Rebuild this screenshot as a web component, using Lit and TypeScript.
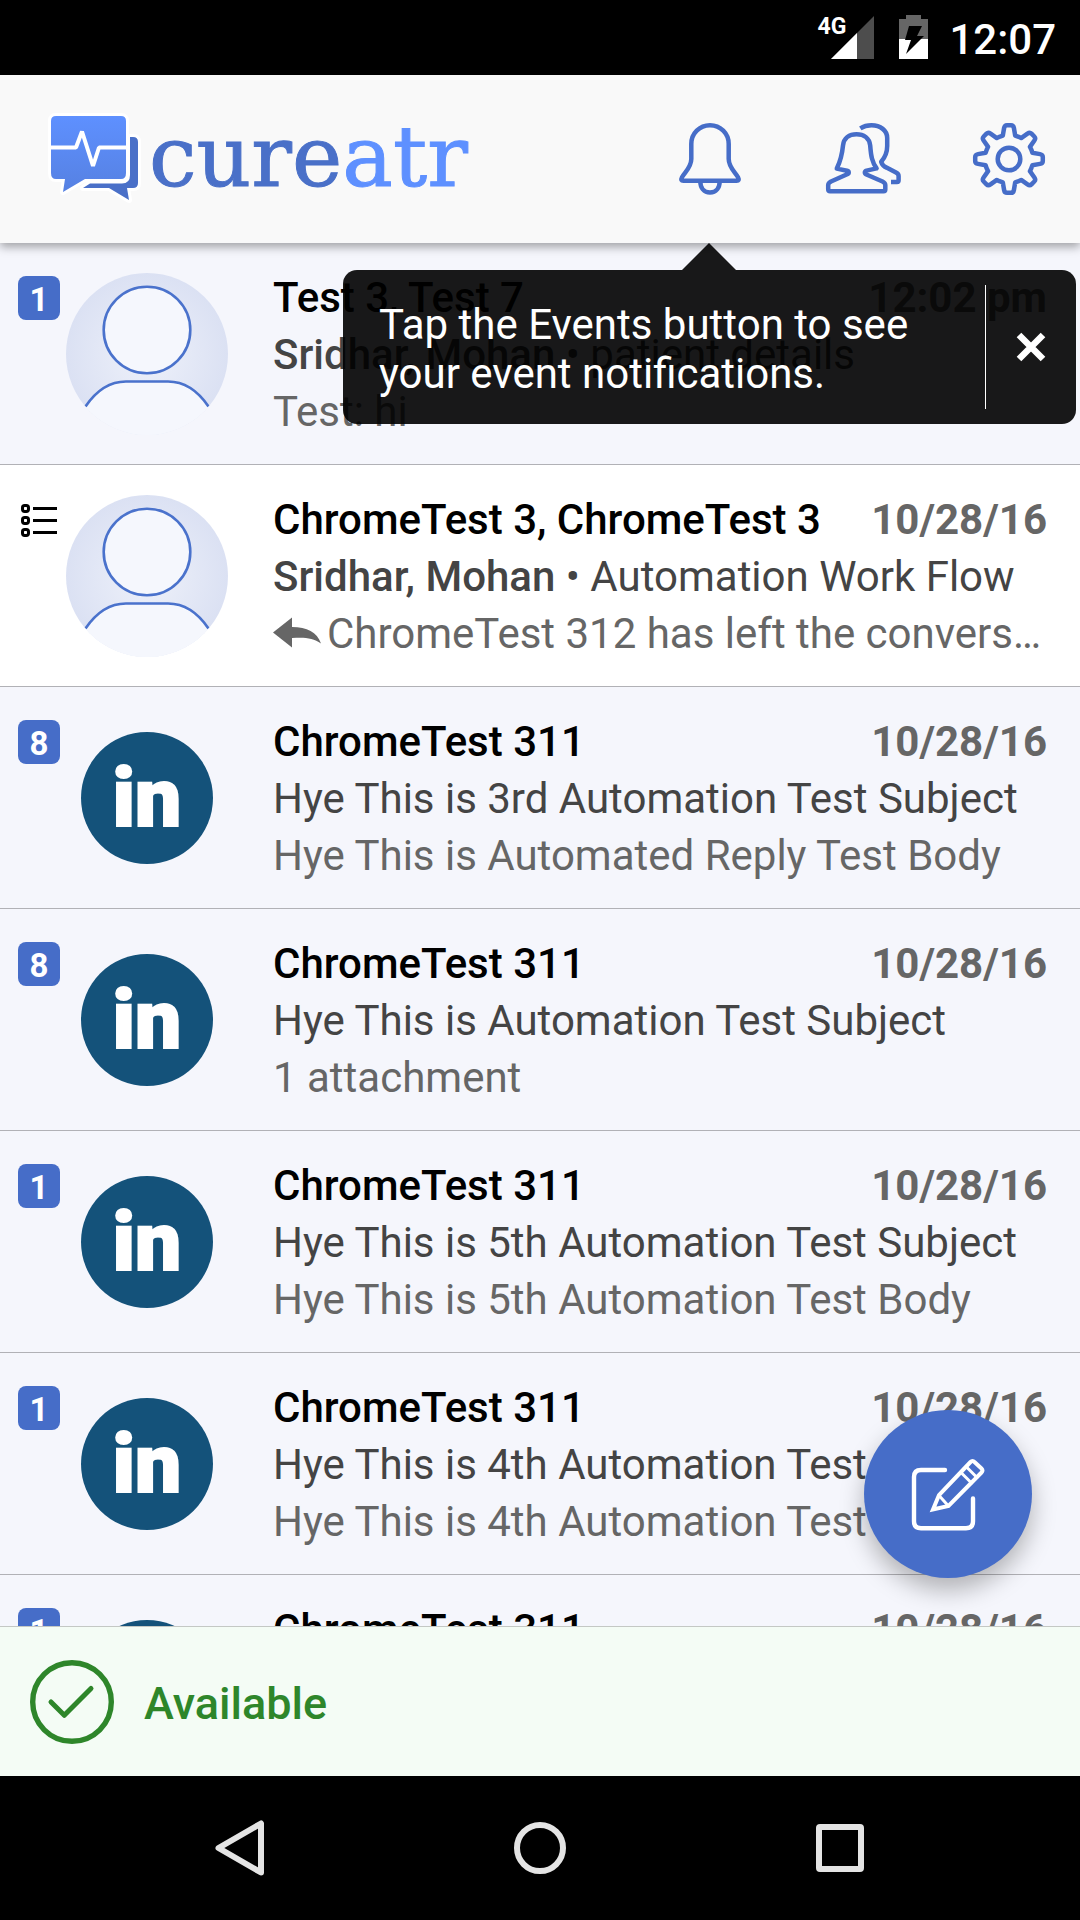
import { LitElement, html, css, svg, nothing } from "lit";
import { customElement, property, state } from "lit/decorators.js";

interface Conversation {
  unread?: string;
  avatar: "person" | "linkedin";
  name: string;
  date: string;
  author?: string;
  subject: string;
  preview: string;
  replied?: boolean;
  read?: boolean;
}

const conversations: Conversation[] = [
  { unread: "1", avatar: "person", name: "Test 3, Test 7", date: "12:02 pm", author: "Sridhar, Mohan", subject: "patient details", preview: "Test: hi" },
  { avatar: "person", name: "ChromeTest 3, ChromeTest 3", date: "10/28/16", author: "Sridhar, Mohan", subject: "Automation Work Flow", preview: "ChromeTest 312 has left the conversation", replied: true, read: true },
  { unread: "8", avatar: "linkedin", name: "ChromeTest 311", date: "10/28/16", subject: "Hye This is 3rd Automation Test Subject", preview: "Hye This is Automated Reply Test Body" },
  { unread: "8", avatar: "linkedin", name: "ChromeTest 311", date: "10/28/16", subject: "Hye This is Automation Test Subject", preview: "1 attachment" },
  { unread: "1", avatar: "linkedin", name: "ChromeTest 311", date: "10/28/16", subject: "Hye This is 5th Automation Test Subject", preview: "Hye This is 5th Automation Test Body" },
  { unread: "1", avatar: "linkedin", name: "ChromeTest 311", date: "10/28/16", subject: "Hye This is 4th Automation Test Subject", preview: "Hye This is 4th Automation Test Body" },
  { unread: "1", avatar: "linkedin", name: "ChromeTest 311", date: "10/28/16", subject: "Hye This is 2nd Automation Test Subject", preview: "Hye This is 2nd Automation Test Body" },
];

/** Outline of an eight-toothed gear centred on 36,36. */
function gearPath(): string {
  const at = (x: number, y: number, turn: number) => {
    const a = (turn * Math.PI) / 4;
    const px = 36 + x * Math.cos(a) - y * Math.sin(a);
    const py = 36 + x * Math.sin(a) + y * Math.cos(a);
    return `${px.toFixed(2)} ${py.toFixed(2)}`;
  };
  let d = "";
  for (let k = 0; k < 8; k++) {
    d += `${k ? "L" : "M"}${at(-6.2, -23.4, k)}L${at(-4.9, -31, k)}Q${at(-4.4, -33.8, k)} ${at(-2, -33.8, k)}`;
    d += `L${at(2, -33.8, k)}Q${at(4.4, -33.8, k)} ${at(4.9, -31, k)}L${at(6.2, -23.4, k)}L${at(9.6, -22.2, k)}`;
  }
  return d + "Z";
}

const bellIcon = svg`
  <path d="M17.3 21C17.3 10.4 25.6 2.3 36 2.3S54.7 10.4 54.7 21V36C54.7 44.5 61.5 49.5 64 54.2C65.4 56.8 64.6 57.7 62.6 57.7H9.4C7.4 57.7 6.6 56.8 8 54.2C10.5 49.5 17.3 44.5 17.3 36Z"/>
  <path d="M26.3 58C26.3 65 30 69.6 36 69.6S45.7 65 45.7 58"/>`;

const peopleIcon = svg`
  <path d="M10.8 45.6C14 39 16 33 17 22.5C17.8 15 23.4 11.3 30.5 11.3S43.3 15 44.2 22.5C45 33 46 39 50.6 45.4L40.5 47.6C38.4 48.2 38.2 50.4 40.4 51.5L56.5 58.5C58.6 59.6 59.3 60.3 59.3 62V66.6Q59.3 68.3 57.6 68.3H4Q2.2 68.3 2.2 66.6V62C2.2 60.3 3 59.6 5 58.5L21.2 51.3C23.4 50.2 23.2 48.3 21 47.7Z"/>
  <path d="M34.3 5.3C38 3 41.5 2.3 45.5 2.3C54.5 2.3 61.2 7.6 61.2 15V23C61.2 30.5 58.5 35 55.2 38.8C56.2 42.3 57.5 43.3 60.5 44.6L70 49.5C72 50.5 72.6 51.5 72.6 53V57.3Q72.6 59 71 59H65"/>`;

@customElement("contact-avatar")
export class ContactAvatar extends LitElement {
  @property() kind: "person" | "linkedin" = "person";

  static styles = css`
    :host { display: grid; place-items: center; width: 162px; height: 162px; }
    .brand {
      display: grid; place-items: center; width: 132px; height: 132px;
      border-radius: 50%; background: #14527a;
    }
    .mark { font: 900 82px/96px Roboto, sans-serif; color: #fff; -webkit-text-stroke: 2px #fff; }
    svg { display: block; width: 162px; height: 162px; }
  `;

  render() {
    if (this.kind === "linkedin") {
      return html`<div class="brand"><span class="mark">in</span></div>`;
    }
    return html`
      <svg viewBox="0 0 162 162" aria-hidden="true">
        <defs>
          <radialGradient id="disc"><stop offset="0" stop-color="#eef1fa"/><stop offset="1" stop-color="#dbe1f3"/></radialGradient>
          <clipPath id="round"><circle cx="81" cy="81" r="81"/></clipPath>
        </defs>
        <g clip-path="url(#round)">
          <rect width="162" height="162" fill="url(#disc)"/>
          <path d="M20 134C30 119 44 108.5 60 108.5H102C118 108.5 132 119 142 134V170H20Z" fill="#f5f7fd"/>
          <rect y="134" width="162" height="30" fill="#f5f7fd"/>
          <path d="M19.5 133.500C30 118 44 108.500 60 108.500H102C118 108.500 132 118 142.500 133.500" fill="none" stroke="#4a72cc" stroke-width="2.600"/>
        </g>
        <circle cx="81" cy="57" r="43.300" fill="#f5f7fd" stroke="#4a72cc" stroke-width="2.600"/>
      </svg>`;
  }
}

@customElement("conversation-row")
export class ConversationRow extends LitElement {
  @property({ attribute: false }) item!: Conversation;

  static styles = css`
    :host { display: block; }
    .row {
      display: grid; grid-template-columns: 66px 207px minmax(0, 1fr);
      height: 221px; border-bottom: 1px solid #b1b1b6;
      background: #f5f6fc; color: #444; text-decoration: none;
      font: 400 42px/57px Roboto, sans-serif;
    }
    .row.read { background: #fff; }
    .badge {
      width: 42px; height: 44px; margin: 33px 0 0 18px; border-radius: 8px;
      background: #466dc8; color: #fff; text-align: center;
      font-size: 33px; line-height: 48px; font-weight: 700;
    }
    .flow { display: block; width: 36px; height: 33px; margin: 39px 0 0 21px; }
    .face { margin-top: 30px; }
    .body { padding: 26px 33px 0 0; }
    .top { display: flex; justify-content: space-between; gap: 24px; }
    .line, .name { white-space: nowrap; overflow: hidden; text-overflow: ellipsis; }
    .name { color: #000; font-weight: 500; }
    .date { color: #666; font-weight: 700; white-space: nowrap; }
    .author { font-weight: 500; }
    .preview { display: flex; gap: 6px; color: #666; }
    .reply { flex: none; width: 48px; height: 57px; }
  `;

  render() {
    const c = this.item;
    return html`
      <a class="row ${c.read ? "read" : ""}" href="#conversation">
        ${c.unread
          ? html`<span class="badge">${c.unread}</span>`
          : html`<svg class="flow" viewBox="0 0 36 33" fill="none" stroke="#000" stroke-width="3" aria-hidden="true">
              ${[4.5, 16.5, 28.5].map((y) => svg`<rect x="1.500" y=${y - 3} width="6" height="6" rx="2.200"/><path d=${`M12 ${y}H36`}/>`)}
            </svg>`}
        <contact-avatar class="face" .kind=${c.avatar}></contact-avatar>
        <div class="body">
          <div class="top">
            <span class="name">${c.name}</span>
            <span class="date">${c.date}</span>
          </div>
          <div class="line">${c.author ? html`<span class="author">${c.author}</span> • ` : nothing}${c.subject}</div>
          <div class="preview">
            ${c.replied
              ? html`<svg class="reply" viewBox="0 0 48 57" fill="#666" aria-hidden="true"><path d="M0 27.500L19 12.500V22C34 22 44 27 48 38.500C40 33 32 32 19 33V42.500Z"/></svg>`
              : nothing}
            <span class="line">${c.preview}</span>
          </div>
        </div>
      </a>`;
  }
}

@customElement("app-root")
export class AppRoot extends LitElement {
  @state() private tipOpen = true;

  static styles = css`
    :host {
      display: flex; flex-direction: column; height: 100vh; overflow: hidden;
      font-family: Roboto, sans-serif; background: #000;
    }
    button { margin: 0; padding: 0; border: 0; background: none; font: inherit; color: inherit; cursor: pointer; }
    svg { display: block; }
    .status {
      flex: none; height: 75px; padding-right: 24px; display: flex;
      justify-content: flex-end; align-items: flex-start; color: #fff;
    }
    .network { font-size: 23px; line-height: 24px; font-weight: 700; margin-top: 15px; }
    .signal { width: 43px; height: 43px; margin: 16px 25px 0 -15px; }
    .battery { width: 29px; height: 44px; margin: 15px 21px 0 0; }
    .clock { font-size: 42px; line-height: 50px; font-weight: 500; margin-top: 15px; }

    .header {
      position: relative; z-index: 2; flex: none; height: 168px; display: flex;
      align-items: center; justify-content: space-between;
      background: #f9f9f9; box-shadow: 0 4px 9px rgba(0, 0, 0, 0.34);
    }
    .brand { display: flex; align-items: center; margin-left: 48px; gap: 7px; text-decoration: none; }
    .logo { width: 94px; height: 92px; }
    .wordmark { font: 400 85px/100px "DejaVu Serif", serif; color: #4a70c8; -webkit-text-stroke: 1px currentColor; padding-bottom: 4px; }
    .wordmark .light { color: #5e90ff; }
    .tools { display: flex; }
    .tool { width: 152px; height: 168px; display: grid; place-items: center; }
    .tool:last-child { width: 142px; }
    .tool svg { width: 72px; height: 72px; overflow: visible; }
    .line-icon { fill: none; stroke: #466dc8; stroke-width: 4.5; stroke-linejoin: round; }

    .tip {
      position: absolute; top: 100%; right: 4px; margin-top: 27px; width: 733px;
      display: flex; box-sizing: border-box; padding: 15px 0;
      border-radius: 14px; background: rgba(0, 0, 0, 0.9); color: #fff;
    }
    .tip::before {
      content: ""; position: absolute; bottom: 100%; right: 340px; width: 54px; height: 27px;
      background: rgba(0, 0, 0, 0.9); clip-path: polygon(50% 0, 100% 100%, 0 100%);
    }
    .tip-text { flex: 1; margin: 0; padding: 15px 60px 11px 36px; font-size: 42px; line-height: 49px; }
    .tip-close { width: 91px; border-left: 1px solid #fff; display: grid; place-items: center; }
    .tip-close svg { width: 30px; height: 30px; }

    .main { position: relative; flex: 1; min-height: 0; overflow: hidden; background: #f5f6fc; }
    .list { list-style: none; margin: 0; padding: 0; height: 100%; overflow: hidden; }
    .compose {
      position: absolute; right: 48px; bottom: 48px; width: 168px; height: 168px;
      border-radius: 50%; background: #466dc8; display: grid; place-items: center;
      box-shadow: 0 12px 24px rgba(0, 0, 0, 0.28);
    }
    .compose svg { width: 75px; height: 75px; }

    .availability {
      flex: none; height: 150px; border-top: 1px solid #c4c8c4; padding: 0 30px;
      display: flex; align-items: center; gap: 30px; background: #f4fcf5; color: #2e862a;
      font-size: 45px; font-weight: 500; text-align: left;
    }
    .availability svg { width: 84px; height: 84px; }
    .status-label { padding-top: 4px; }
    .nav { flex: none; height: 144px; padding: 0 90px; display: grid; grid-template-columns: repeat(3, 1fr); }
    .nav button { display: grid; place-items: center; }
    .nav svg { width: 60px; height: 60px; fill: none; stroke: #e4e4e4; stroke-width: 6; stroke-linejoin: round; }
  `;

  render() {
    return html`
      <div class="status">
        <span class="network">4G</span>
        <svg class="signal" viewBox="0 0 43 43" aria-hidden="true">
          <path d="M43 0V43H0Z" fill="#4d4d4d"/><path d="M26 17V43H0Z" fill="#fff"/>
        </svg>
        <svg class="battery" viewBox="0 0 29 44" aria-hidden="true">
          <path d="M7 0H22V4H29V44H0V4H7Z" fill="#666"/><path d="M0 24H29V44H0Z" fill="#fff"/>
          <path d="M10 11H23L18 21H25L7 39L12 25H6Z" fill="#000"/>
        </svg>
        <span class="clock">12:07</span>
      </div>

      <header class="header">
        <a class="brand" href="#home">
          <svg class="logo" viewBox="0 0 94 92" aria-hidden="true">
            <defs>
              <linearGradient id="front" x2="0" y2="1"><stop offset="0" stop-color="#5e90ff"/><stop offset="1" stop-color="#5681e2"/></linearGradient>
            </defs>
            <g stroke="#fff" stroke-width="6" stroke-linejoin="round">
              <path d="M82 24H85Q90 24 90 29V70Q90 75 85 75H79L81 87L61 75H35L45 68H76Q82 68 82 62Z"/>
              <path d="M8 3H73Q78 3 78 8V60Q78 66 73 66H37L15 79L17 66H8Q3 66 3 60V8Q3 3 8 3Z"/>
            </g>
            <path d="M82 24H85Q90 24 90 29V70Q90 75 85 75H79L81 87L61 75H35L42 70.500H74Q82 70.500 82 62Z" fill="#4a70c8"/>
            <path d="M8 3H73Q78 3 78 8V60Q78 66 73 66H37L15 79L17 66H8Q3 66 3 60V8Q3 3 8 3Z" fill="url(#front)"/>
            <path d="M3 34.500H28L34 18.500L45 53L51 34.500H78" fill="none" stroke="#fff" stroke-width="4" stroke-linejoin="bevel"/>
          </svg>
          <span class="wordmark">cure<span class="light">atr</span></span>
        </a>
        <nav class="tools">
          <button class="tool" aria-label="Events"><svg class="line-icon" viewBox="0 0 72 72">${bellIcon}</svg></button>
          <button class="tool" aria-label="Contacts"><svg class="line-icon" viewBox="0 0 72 72">${peopleIcon}</svg></button>
          <button class="tool" aria-label="Settings">
            <svg class="line-icon" viewBox="0 0 72 72"><path d=${gearPath()}/><circle cx="36" cy="36" r="11.300"/></svg>
          </button>
        </nav>
        ${this.tipOpen
          ? html`<div class="tip" role="status">
              <p class="tip-text">Tap the Events button to see your event notifications.</p>
              <button class="tip-close" aria-label="Close" @click=${() => (this.tipOpen = false)}>
                <svg viewBox="0 0 30 30" fill="none" stroke="#fff" stroke-width="6.500"><path d="M3 3L27 27M27 3L3 27"/></svg>
              </button>
            </div>`
          : nothing}
      </header>

      <main class="main">
        <ul class="list">
          ${conversations.map((c) => html`<li><conversation-row .item=${c}></conversation-row></li>`)}
        </ul>
        <button class="compose" aria-label="Compose">
          <svg viewBox="0 0 75 75" fill="none" stroke="#fff" stroke-width="4.400" stroke-linecap="round" stroke-linejoin="round">
            <path d="M34 13H10Q3 13 3 20V64.300Q3 71.300 10 71.300H55Q62 71.300 62 64.300V41.500"/>
            <path stroke-width="4" stroke-linejoin="miter" d="M22 52.500L28 38L59.500 5Q61.500 3 63.500 5L70.500 11.500Q72.500 13.500 70.500 15.500L37.500 49Z"/>
            <path stroke-width="3" d="M28 38.500L37 48.500M50.500 16L60.500 26M56 10.500L66 20.500"/>
          </svg>
        </button>
      </main>

      <button class="availability">
        <svg viewBox="0 0 84 84" fill="none" stroke="#2e862a" stroke-linecap="round" stroke-linejoin="round" aria-hidden="true">
          <circle cx="42" cy="42" r="39.300" stroke-width="5.400"/><path d="M21 42L34.300 55.300L61 28.500" stroke-width="5"/>
        </svg>
        <span class="status-label">Available</span>
      </button>

      <nav class="nav">
        <button aria-label="Back"><svg viewBox="0 0 60 60"><path d="M51 5.500V54.500L8.500 30Z"/></svg></button>
        <button aria-label="Home"><svg viewBox="0 0 60 60"><circle cx="30" cy="30" r="23"/></svg></button>
        <button aria-label="Recent apps"><svg viewBox="0 0 60 60"><rect x="9" y="9" width="42" height="42" rx="1"/></svg></button>
      </nav>`;
  }
}
